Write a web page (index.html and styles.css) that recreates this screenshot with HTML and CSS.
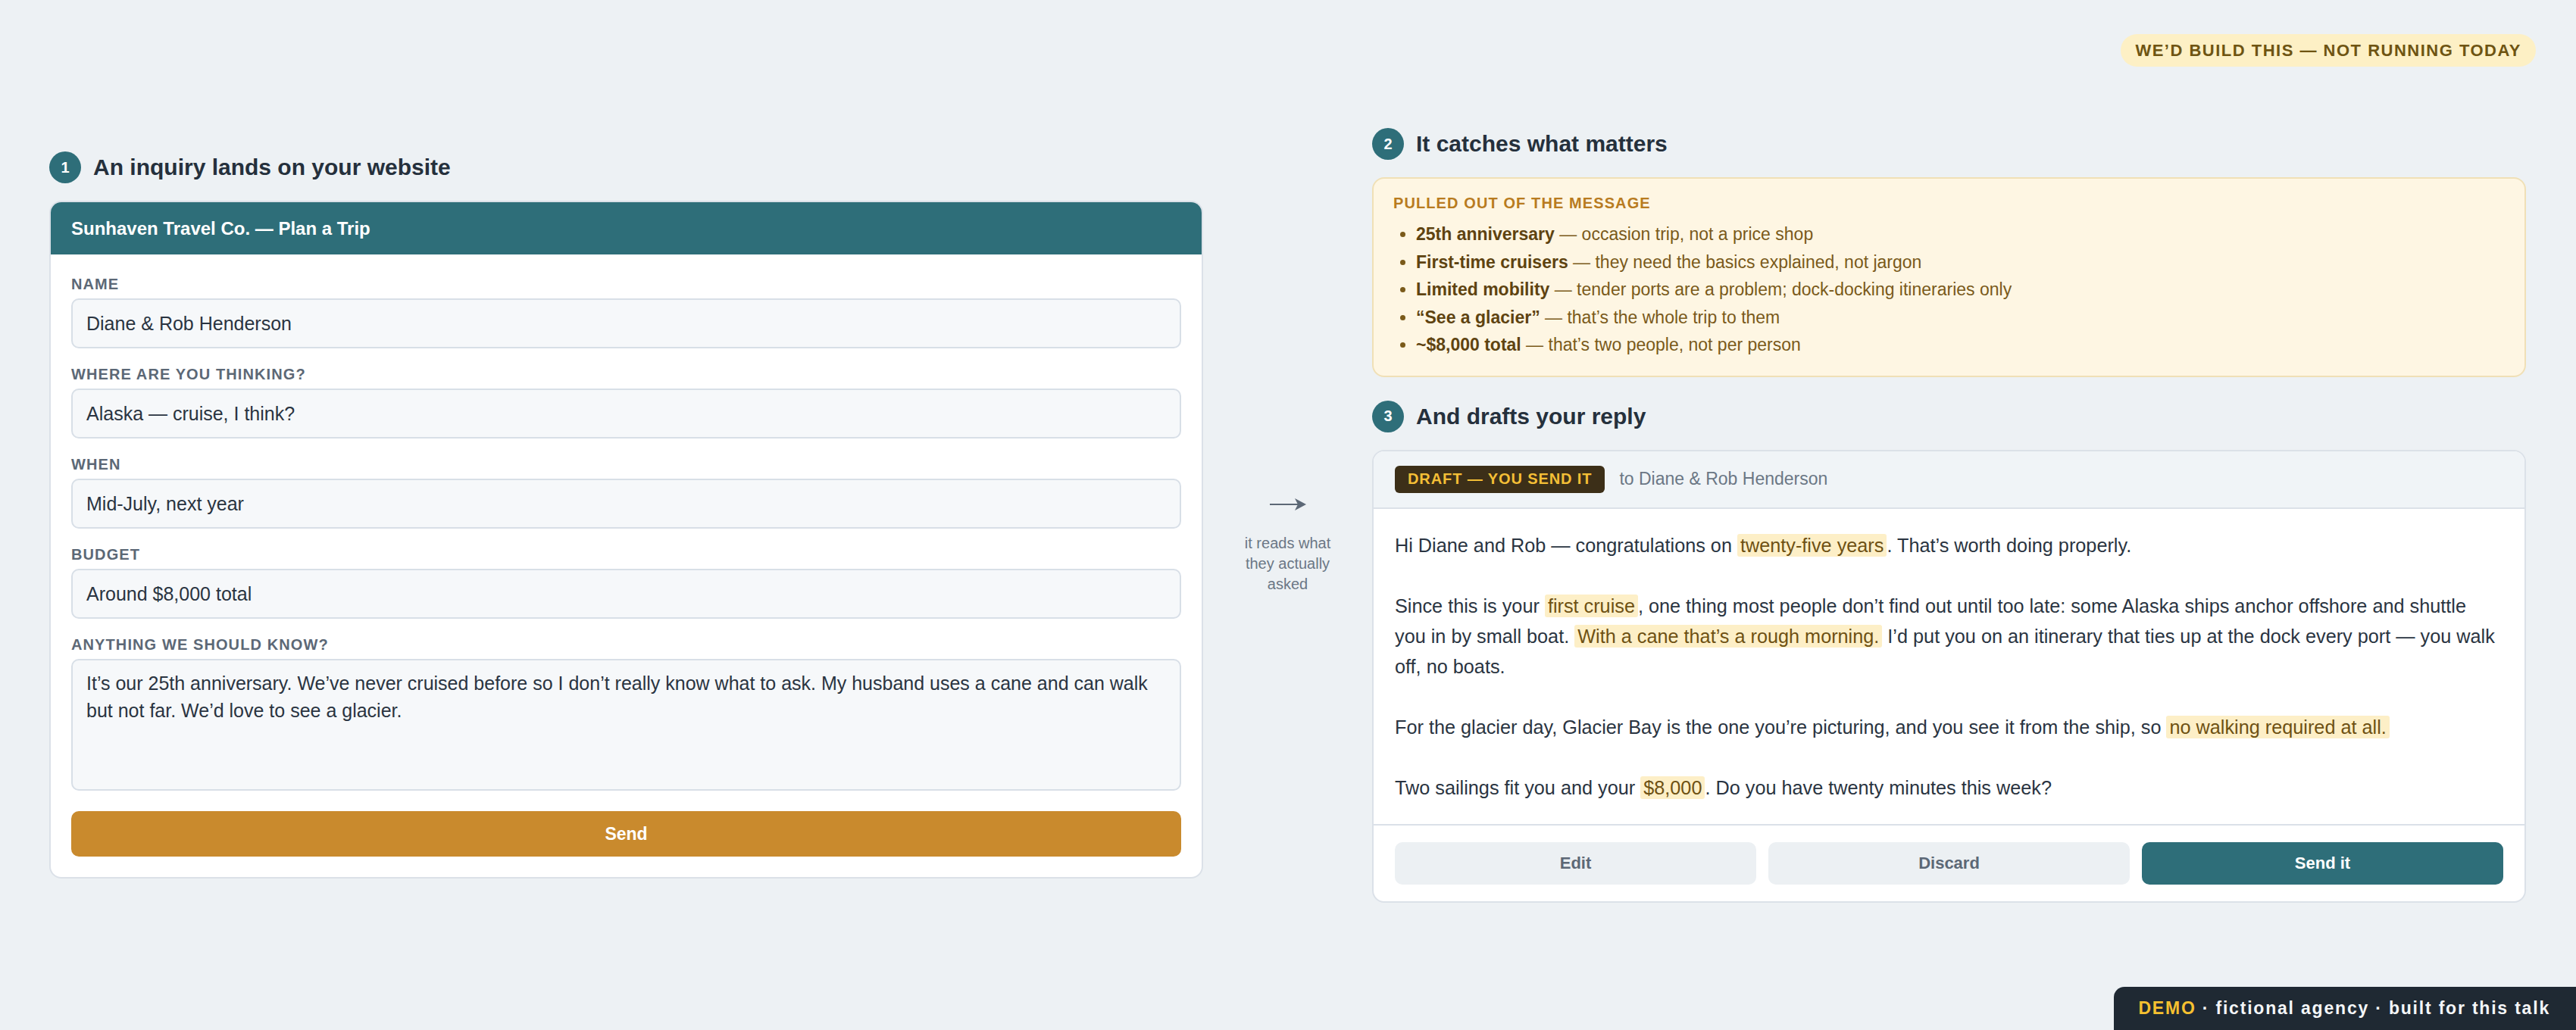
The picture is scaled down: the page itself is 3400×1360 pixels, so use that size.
FILE: index.html
```html
<!DOCTYPE html>
<html lang="en">
<head>
  <meta charset="UTF-8">
  <title>Sunhaven Travel — Inquiry to Reply</title>
  <link rel="stylesheet" href="styles.css">
</head>
<body>

  <div class="topbar">
    <span class="status-pill">We’d build this — not running today</span>
  </div>

  <main class="flow">

    <!-- Step 1: the website form -->
    <section class="column">
      <h2 class="step"><span class="step-num">1</span>An inquiry lands on your website</h2>
      <div class="card">
        <div class="form-head">Sunhaven Travel Co. — Plan a Trip</div>
        <div class="form-body">
          <div class="field">
            <div class="field-label">Name</div>
            <div class="field-input">Diane &amp; Rob Henderson</div>
          </div>
          <div class="field">
            <div class="field-label">Where are you thinking?</div>
            <div class="field-input">Alaska — cruise, I think?</div>
          </div>
          <div class="field">
            <div class="field-label">When</div>
            <div class="field-input">Mid-July, next year</div>
          </div>
          <div class="field">
            <div class="field-label">Budget</div>
            <div class="field-input">Around $8,000 total</div>
          </div>
          <div class="field">
            <div class="field-label">Anything we should know?</div>
            <div class="field-input field-area">It’s our 25th anniversary. We’ve never cruised before so I don’t really know what to ask. My husband uses a cane and can walk but not far. We’d love to see a glacier.</div>
          </div>
          <div class="send-btn">Send</div>
        </div>
      </div>
    </section>

    <!-- Arrow between the two sides -->
    <div class="handoff">
      <svg width="48" height="20" viewBox="0 0 48 20">
        <line x1="0" y1="10" x2="40" y2="10" stroke="#5c6876" stroke-width="2"/>
        <path d="M33 2 L48 10 L33 18 L37 10 Z" fill="#5c6876"/>
      </svg>
      <p>it reads what they actually asked</p>
    </div>

    <!-- Steps 2 and 3 -->
    <section class="column">
      <h2 class="step"><span class="step-num">2</span>It catches what matters</h2>
      <div class="notes">
        <div class="notes-title">Pulled out of the message</div>
        <ul>
          <li><b>25th anniversary</b> — occasion trip, not a price shop</li>
          <li><b>First-time cruisers</b> — they need the basics explained, not jargon</li>
          <li><b>Limited mobility</b> — tender ports are a problem; dock-docking itineraries only</li>
          <li><b>“See a glacier”</b> — that’s the whole trip to them</li>
          <li><b>~$8,000 total</b> — that’s two people, not per person</li>
        </ul>
      </div>

      <h2 class="step step-next"><span class="step-num">3</span>And drafts your reply</h2>
      <div class="card">
        <div class="draft-head">
          <span class="draft-tag">Draft — you send it</span>
          <span class="draft-to">to Diane &amp; Rob Henderson</span>
        </div>
        <div class="draft-body">
          <p>Hi Diane and Rob — congratulations on <mark>twenty-five years</mark>. That’s worth doing properly.</p>
          <p>Since this is your <mark>first cruise</mark>, one thing most people don’t find out until too late: some Alaska ships anchor offshore and shuttle you in by small boat. <mark>With a cane that’s a rough morning.</mark> I’d put you on an itinerary that ties up at the dock every port — you walk off, no boats.</p>
          <p>For the glacier day, Glacier Bay is the one you’re picturing, and you see it from the ship, so <mark>no walking required at all.</mark></p>
          <p>Two sailings fit you and your <mark>$8,000</mark>. Do you have twenty minutes this week?</p>
        </div>
        <div class="draft-actions">
          <div class="btn">Edit</div>
          <div class="btn">Discard</div>
          <div class="btn btn-primary">Send it</div>
        </div>
      </div>
    </section>

  </main>

  <div class="demo-tag"><span class="demo-word">DEMO</span> · fictional agency · built for this talk</div>

</body>
</html>
```

FILE: styles.css
```css
* {
  box-sizing: border-box;
}

body {
  margin: 0;
  background: #edf1f4;
  font-family: 'Liberation Sans', Arial, sans-serif;
  color: #25303c;
  min-height: 100vh;
}

/* Top status pill */
.topbar {
  display: flex;
  justify-content: flex-end;
  padding: 45px 53px 0 0;
}

.status-pill {
  display: inline-flex;
  align-items: center;
  height: 43px;
  padding: 0 19px;
  border-radius: 22px;
  background: #fdf0c5;
  color: #6e5412;
  font-size: 22px;
  font-weight: bold;
  letter-spacing: 1.5px;
  text-transform: uppercase;
}

/* Three-part layout */
.flow {
  display: grid;
  grid-template-columns: 1fr 223px 1fr;
  align-items: center;
  padding: 0 66px 0 65px;
  margin-top: 81px;
}

.column {
  display: flex;
  flex-direction: column;
}

.step {
  display: flex;
  align-items: center;
  gap: 16px;
  margin: 0 0 23px;
  font-size: 30px;
  font-weight: bold;
  color: #25303c;
}

.step-next {
  margin-top: 31px;
}

.step-num {
  width: 42px;
  height: 42px;
  border-radius: 50%;
  background: #2e6e79;
  color: #fff;
  font-size: 20px;
  display: flex;
  align-items: center;
  justify-content: center;
}

.card {
  background: #fff;
  border: 2px solid #dbe1e8;
  border-radius: 16px;
  overflow: hidden;
}

/* Form card */
.form-head {
  height: 69px;
  display: flex;
  align-items: center;
  padding: 0 27px;
  background: #2e6e79;
  color: #fff;
  font-size: 24px;
  font-weight: bold;
}

.form-body {
  display: flex;
  flex-direction: column;
  gap: 22px;
  padding: 27px;
}

.field-label {
  font-size: 20px;
  line-height: 24px;
  font-weight: bold;
  letter-spacing: 1.1px;
  text-transform: uppercase;
  color: #5c6876;
  margin-bottom: 7px;
}

.field-input {
  height: 66px;
  display: flex;
  align-items: center;
  padding: 0 18px;
  background: #f6f8fa;
  border: 2px solid #d8dfe7;
  border-radius: 10px;
  font-size: 25px;
  color: #2a3441;
}

.field-area {
  height: 174px;
  display: block;
  padding: 12px 18px;
  line-height: 36px;
}

.send-btn {
  margin-top: 5px;
  height: 60px;
  display: flex;
  align-items: center;
  justify-content: center;
  background: #c98a2d;
  border-radius: 10px;
  color: #fff;
  font-size: 23px;
  font-weight: bold;
}

/* Middle arrow */
.handoff {
  display: flex;
  flex-direction: column;
  align-items: center;
  padding-top: 80px;
}

.handoff svg {
  display: block;
  margin-bottom: 28px;
}

.handoff p {
  margin: 0;
  max-width: 130px;
  text-align: center;
  font-size: 20px;
  line-height: 27px;
  color: #6b7785;
}

/* Extracted notes */
.notes {
  background: #fef6e3;
  border: 2px solid #f0e0b6;
  border-radius: 16px;
  padding: 20px 26px 22px;
  color: #7a5a1a;
}

.notes-title {
  font-size: 20px;
  line-height: 24px;
  font-weight: bold;
  letter-spacing: 1.1px;
  text-transform: uppercase;
  color: #b87b20;
  margin-bottom: 11px;
}

.notes ul {
  margin: 0;
  padding-left: 30px;
}

.notes li {
  font-size: 23px;
  line-height: 36.5px;
}

.notes b {
  color: #5e4310;
}

/* Draft reply card */
.draft-head {
  display: flex;
  align-items: center;
  gap: 19px;
  padding: 19px 28px;
  background: #f0f4f7;
  border-bottom: 2px solid #dbe1e8;
}

.draft-tag {
  height: 36px;
  display: inline-flex;
  align-items: center;
  padding: 0 17px;
  border-radius: 6px;
  background: #3c2f18;
  color: #f4bf36;
  font-size: 20px;
  font-weight: bold;
  letter-spacing: 0.9px;
  text-transform: uppercase;
}

.draft-to {
  font-size: 23px;
  color: #6b7785;
}

.draft-body {
  padding: 28px 31px 28px 28px;
  font-size: 25.25px;
  line-height: 40px;
  color: #2a3441;
}

.draft-body p {
  margin: 0 0 40px;
}

.draft-body p:last-child {
  margin-bottom: 0;
}

mark {
  background: #fdefc7;
  color: #6e5113;
  padding: 1px 4px;
  border-radius: 3px;
}

.draft-actions {
  display: grid;
  grid-template-columns: 1fr 1fr 1fr;
  gap: 16px;
  padding: 22px 28px;
  border-top: 2px solid #dbe1e8;
}

.btn {
  height: 56px;
  display: flex;
  align-items: center;
  justify-content: center;
  border-radius: 10px;
  background: #ecf0f3;
  color: #5c6876;
  font-size: 22px;
  font-weight: bold;
}

.btn-primary {
  background: #2e6e79;
  color: #fff;
}

/* Corner footer */
.demo-tag {
  position: fixed;
  right: 0;
  bottom: 0;
  height: 57px;
  display: flex;
  align-items: center;
  padding: 0 34px 0 32px;
  background: #1f2933;
  border-top-left-radius: 14px;
  color: #f4f6f8;
  font-size: 23px;
  font-weight: bold;
  letter-spacing: 1.8px;
  white-space: pre;
}

.demo-word {
  color: #f5c030;
}
```
